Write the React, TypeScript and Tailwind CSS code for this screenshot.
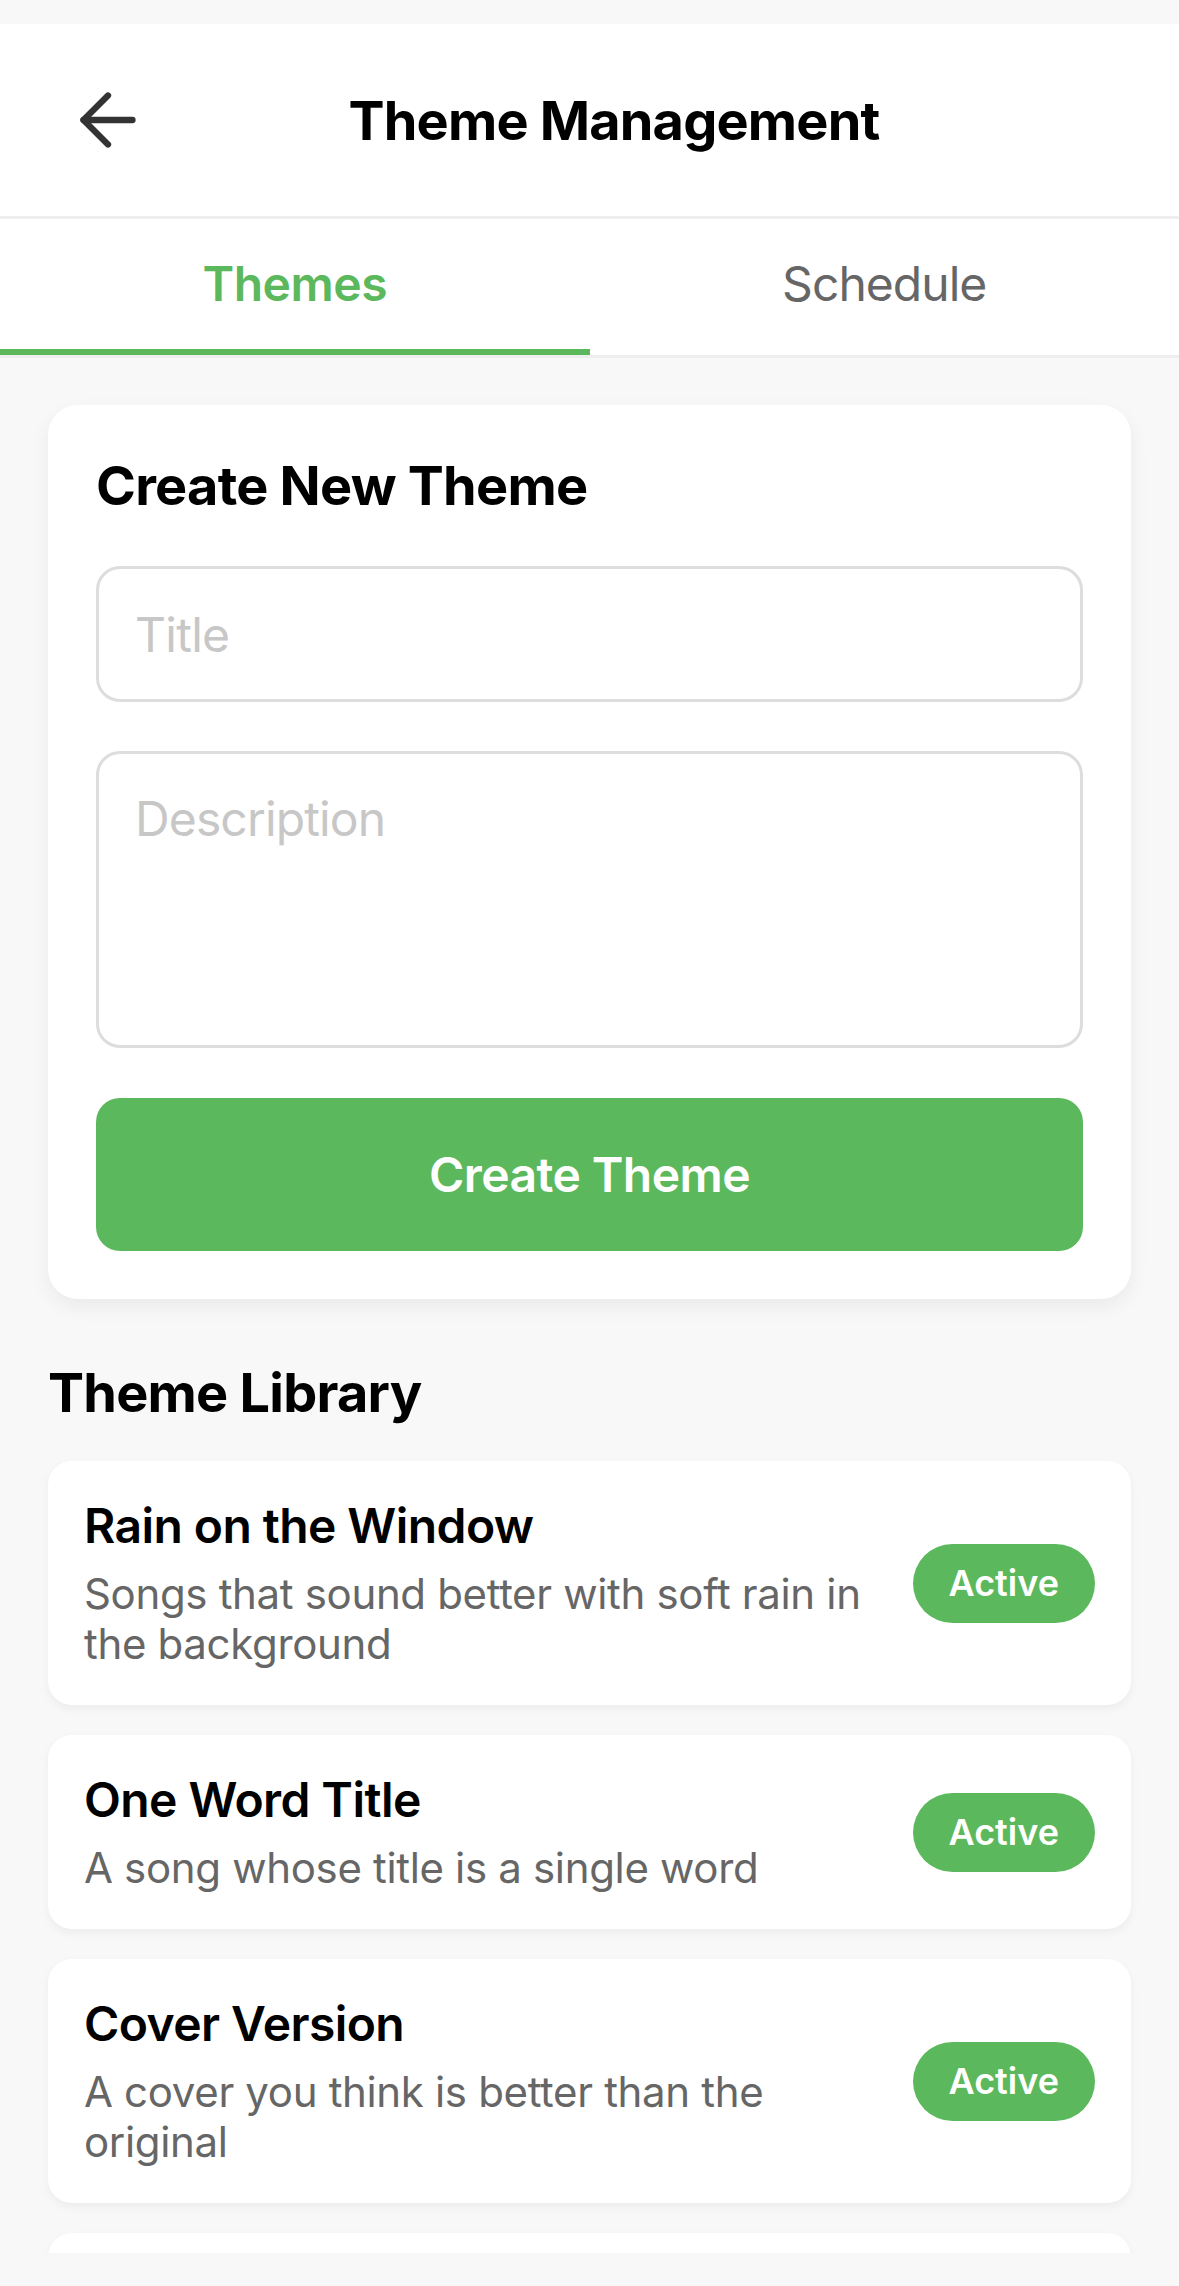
import { ArrowLeft } from "lucide-react";

const themes = [
  { title: "Rain on the Window", description: "Songs that sound better with soft rain in the background" },
  { title: "One Word Title", description: "A song whose title is a single word" },
  { title: "Cover Version", description: "A cover you think is better than the original" },
  { title: "Late Night Drive", description: "Songs for an empty road after midnight" },
];

const ThemeCard = ({ title, description }: { title: string; description: string }) => {
  return (
    <div className="bg-white rounded-[24px] p-[36px] flex items-center shadow-[0_4px_10px_rgba(0,0,0,0.05)]">
      <div className="flex-1 min-w-0 pr-[36px]">
        <h3 className="text-[48px] leading-[58px] font-semibold tracking-[-0.012em] text-black">{title}</h3>
        <p className="mt-[14px] text-[42px] leading-[50px] tracking-[-0.008em] text-[#666666]">{description}</p>
      </div>
      <span className="shrink-0 bg-[#5cb85c] rounded-full px-[36px] py-[18px] text-[36px] leading-[43px] font-semibold text-white">
        Active
      </span>
    </div>
  );
};

export default function App() {
  return (
    <div className="h-[2286px] w-full bg-[#f8f8f8] font-['Inter',sans-serif] flex flex-col overflow-hidden">
      <div className="h-[24px] shrink-0" />
      <header className="h-[195px] shrink-0 bg-white border-b-[3px] border-[#eeeeee] flex items-center pl-[66px]">
        <button className="flex items-center">
          <ArrowLeft size={84} strokeWidth={1.8} color="#333333" />
        </button>
        <h1 className="flex-1 text-center pr-[101px] text-[54px] leading-[65px] font-bold tracking-[-0.015em] text-black">
          Theme Management
        </h1>
      </header>
      <nav className="h-[139px] shrink-0 bg-white border-b-[3px] border-[#eeeeee] flex">
        <button className="flex-1 flex items-center justify-center border-b-[6px] border-[#5cb85c] text-[48px] font-semibold tracking-[-0.01em] text-[#5cb85c]">
          Themes
        </button>
        <button className="flex-1 flex items-center justify-center border-b-[6px] border-transparent text-[48px] tracking-[-0.02em] text-[#666666]">
          Schedule
        </button>
      </nav>
      <main className="flex-1 min-h-0 overflow-hidden px-[48px] pt-[47px]">
        <section className="bg-white rounded-[30px] p-[48px] shadow-[0_8px_20px_rgba(0,0,0,0.06)]">
          <h2 className="text-[54px] leading-[65px] font-bold tracking-[-0.014em] text-black mb-[48px]">Create New Theme</h2>
          <input
            placeholder="Title"
            className="block w-full h-[136px] border-[3px] border-[#dddddd] rounded-[24px] px-[36px] text-[48px] tracking-[-0.015em] outline-none placeholder:text-[#c7c7c7]"
          />
          <textarea
            placeholder="Description"
            className="block w-full mt-[49px] h-[297px] border-[3px] border-[#dddddd] rounded-[24px] px-[36px] pt-[36px] text-[48px] leading-[58px] tracking-[-0.018em] outline-none resize-none placeholder:text-[#c7c7c7]"
          />
          <button className="mt-[50px] w-full h-[153px] bg-[#5cb85c] rounded-[24px] text-white text-[48px] font-semibold tracking-[-0.012em]">
            Create Theme
          </button>
        </section>
        <h2 className="mt-[61px] text-[54px] leading-[65px] font-bold tracking-[-0.014em] text-black">Theme Library</h2>
        <div className="mt-[36px] flex flex-col gap-[30px]">
          {themes.map((t) => (
            <ThemeCard key={t.title} title={t.title} description={t.description} />
          ))}
        </div>
      </main>
      <div className="h-[33px] shrink-0" />
    </div>
  );
}
